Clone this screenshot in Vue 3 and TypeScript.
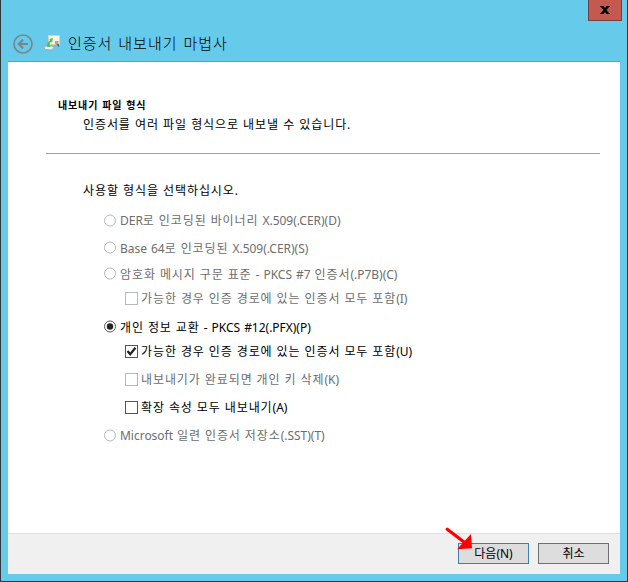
<script setup lang="ts">
interface Option {
  kind: 'radio' | 'check'
  label: string
  checked?: boolean
  enabled?: boolean
  height: number
}

const options: Option[] = [
  { kind: 'radio', label: 'DER로 인코딩된 바이너리 X.509(.CER)(D)', height: 28 },
  { kind: 'radio', label: 'Base 64로 인코딩된 X.509(.CER)(S)', height: 27 },
  { kind: 'radio', label: '암호화 메시지 구문 표준 - PKCS #7 인증서(.P7B)(C)', height: 25 },
  { kind: 'check', label: '가능한 경우 인증 경로에 있는 인증서 모두 포함(I)', height: 24 },
  { kind: 'radio', label: '개인 정보 교환 - PKCS #12(.PFX)(P)', checked: true, enabled: true, height: 33 },
  { kind: 'check', label: '가능한 경우 인증 경로에 있는 인증서 모두 포함(U)', checked: true, enabled: true, height: 16 },
  { kind: 'check', label: '내보내기가 완료되면 개인 키 삭제(K)', height: 40 },
  { kind: 'check', label: '확장 속성 모두 내보내기(A)', enabled: true, height: 16 },
  { kind: 'radio', label: 'Microsoft 일련 인증서 저장소(.SST)(T)', height: 40 },
]

// Hangul is tracked wider than the Latin text around it.
const runs = (label: string) => label.match(/[가-힣]+|[^가-힣]+/g) ?? []
const isHangul = (run: string) => /[가-힣]/.test(run)
</script>

<template>
  <div class="window">
    <header class="titlebar">
      <svg class="back" width="20" height="20" viewBox="0 0 20 20">
        <circle cx="10" cy="10" r="9" fill="none" stroke="#77868c" stroke-width="1.6" />
        <path d="M15 10H6M10 5.7L5.7 10L10 14.3" fill="none" stroke="#77868c" stroke-width="2.2" />
      </svg>
      <svg class="cert" width="16" height="16" viewBox="0 0 16 16">
        <path d="M4.5 .5H15.5V9.5H4.5Z" fill="#f7f5ee" stroke="#d6d2c5" />
        <path d="M0 12L4 10L10.5 12L7.5 15L1 14.5Z" fill="#eef1f2" stroke="#8e9da3" stroke-width=".8" />
        <path d="M3 12C2.5 8.5 4 6.5 6 5.5L5.3 4L9 3L8 7.5L7 6.8C5.5 8 5.5 9.5 6.5 12Z" fill="#4fc456" />
        <path d="M11 6H14.5V9.5H11Z" fill="#e6a21d" />
        <path d="M12.5 9H15V12L13.5 11Z" fill="#416bb0" />
      </svg>
      <h1>인증서 내보내기 마법사</h1>
      <button class="close" aria-label="닫기">
        <svg width="10" height="8" viewBox="0 0 10 8">
          <path d="M0 0H3.5L5 2L6.5 0H10V1H9L6.5 4L9 7H10V8H6.5L5 6L3.5 8H0V7H1L3.5 4L1 1H0Z" fill="#000" />
        </svg>
      </button>
    </header>
    <main class="page">
      <section class="intro">
        <h2>내보내기 파일 형식</h2>
        <p class="hangul">인증서를 여러 파일 형식으로 내보낼 수 있습니다.</p>
      </section>
      <section class="choices">
        <p class="prompt hangul">사용할 형식을 선택하십시오.</p>
        <label
          v-for="o in options"
          :key="o.label"
          :class="['option', o.kind, { enabled: o.enabled }]"
          :style="{ height: o.height + 'px' }"
        >
          <svg v-if="o.kind === 'radio'" class="mark" width="13" height="13" viewBox="0 0 13 13">
            <circle class="edge" cx="6" cy="6.5" r="5.5" />
            <circle v-if="o.checked" cx="6" cy="6.5" r="3.2" fill="#222" />
          </svg>
          <svg v-else class="mark" width="13" height="13" viewBox="0 0 13 13">
            <rect class="edge" x=".5" y=".5" width="12" height="12" />
            <path v-if="o.checked" d="M2.5 6L5.2 9.3L10.5 2.8" fill="none" stroke="#222" stroke-width="2.2" />
          </svg>
          <span class="label"><span v-for="(run, i) in runs(o.label)" :key="i" :class="isHangul(run) ? 'hangul' : 'latin'">{{ run }}</span></span>
        </label>
      </section>
      <footer>
        <button class="primary">다음(N)</button>
        <button>취소</button>
        <svg class="pointer" width="30" height="25" viewBox="0 0 30 25">
          <path d="M2.2 2.2L19 15" stroke="#f00" stroke-width="3.2" stroke-linecap="round" />
          <path d="M26 7L12 22.3L27 21.3Z" fill="#f00" />
        </svg>
      </footer>
    </main>
  </div>
</template>

<style>
body {
  margin: 0;
}
</style>

<style scoped>
.window {
  box-sizing: border-box;
  width: 628px;
  height: 582px;
  padding: 0 7px 7px;
  background: #66caea;
  border: 1px solid #30383f;
  border-top: 0;
  display: flex;
  flex-direction: column;
  font: 12px/18px 'Noto Sans', 'Noto Sans CJK KR', sans-serif;
  color: #000;
}
.titlebar {
  height: 61px;
  display: flex;
  align-items: flex-start;
  flex: none;
}
.back {
  margin: 34px 0 0 5px;
}
.cert {
  margin: 35px 0 0 11px;
}
h1 {
  margin: 32px 0 0 8px;
  font-size: 15px;
  line-height: 22px;
  font-weight: 300;
  letter-spacing: 1px;
  word-spacing: 1px;
}
.close {
  box-sizing: border-box;
  width: 34px;
  height: 21px;
  margin-left: auto;
  margin-right: -2px;
  padding: 0;
  border: 1px solid #743f43;
  border-top: 0;
  background: #c4594f;
  display: flex;
  align-items: center;
  justify-content: center;
}
.page {
  box-sizing: border-box;
  flex: 1;
  border-top: 1px solid #6b99b0;
  background: #fff;
  display: flex;
  flex-direction: column;
}
.intro {
  margin: 0 20px 0 38px;
  height: 91px;
  border-bottom: 1px solid #a0a0a0;
}
h2 {
  margin: 0;
  padding: 34px 0 0 12px;
  font-size: 10px;
  line-height: 18px;
  font-weight: 700;
  letter-spacing: 0.85px;
  word-spacing: 0.5px;
}
.intro p {
  margin: 1px 0 0 37px;
  line-height: 20px;
}
.hangul {
  letter-spacing: 0.91px;
  word-spacing: 0.15px;
}
.latin {
  letter-spacing: -0.02px;
  word-spacing: 0.9px;
}
.choices {
  flex: 1;
}
.prompt {
  margin: 28px 0 0 75px;
  height: 24px;
}
.option {
  display: flex;
  align-items: center;
  margin-left: 96px;
  color: #6d6d6d;
  white-space: pre;
}
.option.check {
  margin-left: 117px;
}
.option.enabled {
  color: #000;
}
.mark {
  flex: none;
  margin-right: 3px;
}
.label {
  padding-top: 2px;
}
.edge {
  fill: #fff;
  stroke: #b5b9bb;
}
.enabled .edge {
  stroke: #555;
}
footer {
  position: relative;
  box-sizing: border-box;
  height: 41px;
  padding: 9px 11px 0 0;
  border-top: 1px solid #dfdfdf;
  background: #f0f0f0;
  display: flex;
  justify-content: flex-end;
  gap: 9px;
}
footer button {
  box-sizing: border-box;
  width: 71px;
  height: 21px;
  padding: 0;
  border: 1px solid #707070;
  background: #ddd;
  font: inherit;
  color: #000;
}
footer .primary {
  border-color: #3c7fb1;
}
.pointer {
  position: absolute;
  left: 437px;
  top: -7px;
}
</style>
